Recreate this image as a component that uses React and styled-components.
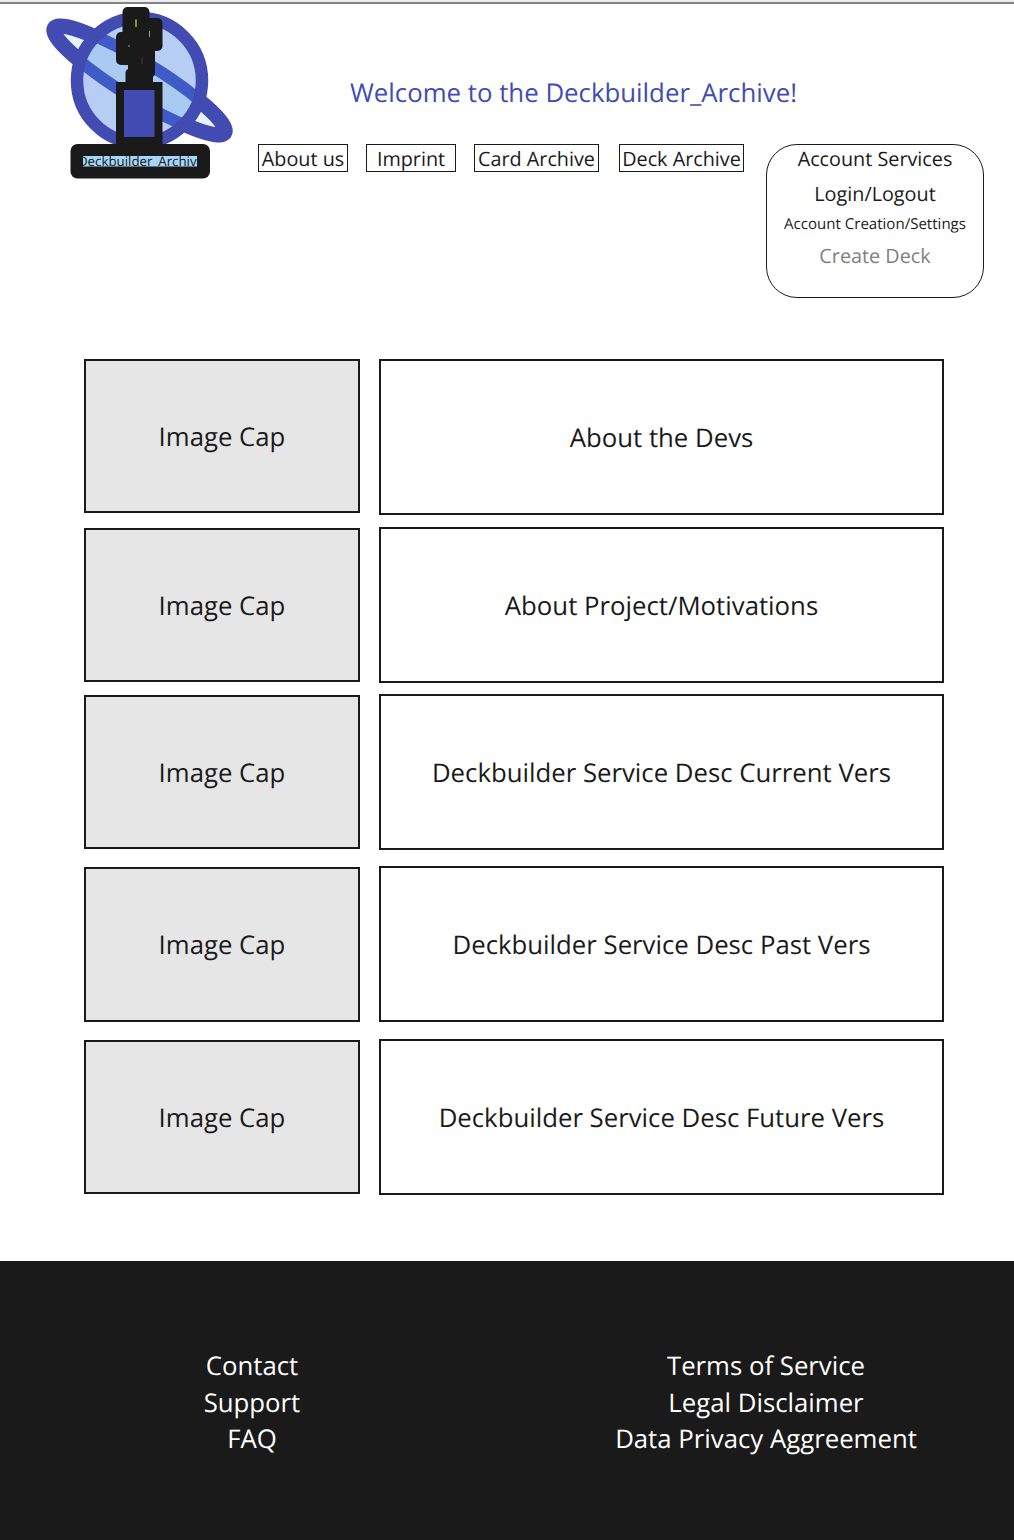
import React from "react";
import styled, { createGlobalStyle } from "styled-components";

const INK = "#1a1a1a";
const BLUE = "#414bb2";

const GlobalStyle = createGlobalStyle`
  *, *::before, *::after { box-sizing: border-box; }
  body {
    margin: 0;
    background: #fff;
    color: ${INK};
    font-family: "Open Sans", "Noto Sans", sans-serif;
    text-rendering: geometricPrecision;
  }
`;

const Page = styled.div`
  width: 1014px;
  height: 1540px;
  display: flex;
  flex-direction: column;
  overflow: hidden;
`;

const TopStrip = styled.div`
  flex: none;
  height: 4px;
  background: #eeeeef;
  border-bottom: 2px solid #838383;
`;

const Header = styled.header`
  flex: none;
  height: 355px;
  display: flex;
  align-items: flex-start;
  padding-left: 36px;
`;

const Logo = styled.svg`
  flex: none;
  display: block;
  width: 210px;
  height: 190px;
  margin-top: -4px;
`;

const Intro = styled.div`
  width: 486px;
  margin: 70px 0 0 12px;
`;

const Title = styled.h1`
  margin: 0;
  padding-left: 92px;
  height: 70px;
  color: ${BLUE};
  font-size: 25.8px;
  font-weight: 400;
  line-height: 37px;
  white-space: nowrap;
`;

const Nav = styled.nav`
  display: grid;
  grid-template-columns: 90px 90px 126px 126px;
  column-gap: 18px;
`;

const NavLink = styled.a`
  height: 28px;
  border: 1px solid ${INK};
  font-size: 19.8px;
  line-height: 27px;
  text-align: center;
  white-space: nowrap;

  &:nth-child(3) { margin-right: 1px; }
  &:nth-child(4) { margin-left: 1px; }
`;

const Account = styled.section`
  flex: none;
  width: 218px;
  height: 154px;
  margin: 140px 0 0 22px;
  border: 1px solid ${INK};
  border-radius: 31px;
  display: flex;
  flex-direction: column;
  align-items: center;
`;

const AccountItem = styled.a`
  height: ${(p) => p.$height}px;
  line-height: ${(p) => p.$line}px;
  font-size: ${(p) => p.$size}px;
  color: ${(p) => (p.$muted ? "#808080" : INK)};
  white-space: nowrap;
`;

const Main = styled.main`
  flex: none;
  height: 902px;
  display: flex;
  align-items: flex-start;
  gap: 19px;
  padding-left: 84px;
`;

const Column = styled.div`
  display: flex;
  flex-direction: column;
  width: ${(p) => p.$width}px;
`;

const Card = styled.div`
  display: flex;
  align-items: center;
  justify-content: center;
  height: ${(p) => p.$height}px;
  margin-top: ${(p) => p.$gap}px;
  padding-bottom: 1px;
  border: 2px solid ${INK};
  background: ${(p) => (p.$filled ? "#e6e6e6" : "#fff")};
  font-size: 25.75px;
  line-height: 36px;
  white-space: nowrap;
`;

const Footer = styled.footer`
  flex: none;
  height: 279px;
  display: flex;
  justify-content: space-between;
  padding: 86px 94px 0 98px;
  background: ${INK};
  color: #fff;
`;

const FooterGroup = styled.div`
  display: flex;
  flex-direction: column;
  width: 308px;
`;

const FooterLink = styled.a`
  font-size: 25.75px;
  line-height: 36.6px;
  text-align: center;
  white-space: nowrap;
`;

const images = [
  { gap: 0, height: 154 },
  { gap: 15, height: 154 },
  { gap: 13, height: 154 },
  { gap: 18, height: 155 },
  { gap: 18, height: 154 },
];

const topics = [
  { text: "About the Devs", gap: 0, height: 156 },
  { text: "About Project/Motivations", gap: 12, height: 156 },
  { text: "Deckbuilder Service Desc Current Vers", gap: 11, height: 156 },
  { text: "Deckbuilder Service Desc Past Vers", gap: 16, height: 156 },
  { text: "Deckbuilder Service Desc Future Vers", gap: 17, height: 156 },
];

function ArchiveLogo() {
  return (
    <Logo viewBox="36 0 210 190" aria-label="Deckbuilder_Archive">
      <defs>
        <clipPath id="planet"><circle cx="139.5" cy="80.5" r="58" /></clipPath>
        <clipPath id="label"><rect x="83" y="156" width="114" height="11" /></clipPath>
      </defs>
      <ellipse cx="139.5" cy="80.5" rx="100" ry="18" transform="rotate(31.5 139.5 80.5)" fill="#e8f4fd" stroke={BLUE} strokeWidth="15" />
      <circle cx="139.5" cy="80.5" r="62" fill="#b6cdf4" />
      <g clipPath="url(#planet)">
        <ellipse cx="139.5" cy="80.5" rx="100" ry="18.5" transform="rotate(31.5 139.5 80.5)" fill="#a9caf3" stroke="#3e5bc7" strokeWidth="12" />
      </g>
      <circle cx="139.5" cy="80.5" r="62.5" fill="none" stroke={BLUE} strokeWidth="12.5" />
      <g fill={INK}>
        <rect x="122.5" y="7" width="27" height="34" rx="5" />
        <rect x="140" y="18" width="22.5" height="33" rx="5" />
        <rect x="116" y="32" width="26" height="33" rx="5" />
        <rect x="128" y="38" width="27" height="39" rx="4" />
        <rect x="125.5" y="69" width="27.5" height="18" rx="4" />
        <rect x="116" y="82" width="46.5" height="67" />
        <rect x="70.5" y="144" width="139.5" height="34.5" rx="7" />
      </g>
      <path d="M136 19.500v7.500" stroke="#b9b92f" strokeWidth="1.500" />
      <path d="M149.500 31v6" stroke="#b3c1dc" strokeWidth=".8" />
      <path d="M129 45v2" stroke="#8398c8" />
      <path d="M142 57.500v6.500" stroke="#57343b" />
      <rect x="124" y="90" width="30.500" height="47" fill={BLUE} />
      <rect x="83" y="156" width="114" height="10.500" fill="#a6d5f7" />
      <g clipPath="url(#label)">
        <text x="141" y="166" textAnchor="middle" fill={INK} fontSize="13.3" fontFamily='"Open Sans", sans-serif'>Deckbuilder_Archive</text>
      </g>
    </Logo>
  );
}

export default function App() {
  return (
    <Page>
      <GlobalStyle />
      <TopStrip />
      <Header>
        <ArchiveLogo />
        <Intro>
          <Title>Welcome to the Deckbuilder_Archive!</Title>
          <Nav>
            <NavLink>About us</NavLink>
            <NavLink>Imprint</NavLink>
            <NavLink>Card Archive</NavLink>
            <NavLink>Deck Archive</NavLink>
          </Nav>
        </Intro>
        <Account>
          <AccountItem $height={32} $line={28} $size={19.8}>Account Services</AccountItem>
          <AccountItem $height={32} $line={34} $size={19.8}>Login/Logout</AccountItem>
          <AccountItem $height={30} $line={31} $size={15.05}>Account Creation/Settings</AccountItem>
          <AccountItem $height={34} $line={34} $size={19.8} $muted>Create Deck</AccountItem>
        </Account>
      </Header>
      <Main>
        <Column $width={276}>
          {images.map((c, i) => (
            <Card key={i} $filled $gap={c.gap} $height={c.height}>Image Cap</Card>
          ))}
        </Column>
        <Column $width={565}>
          {topics.map((c) => (
            <Card key={c.text} $gap={c.gap} $height={c.height}>{c.text}</Card>
          ))}
        </Column>
      </Main>
      <Footer>
        <FooterGroup>
          <FooterLink>Contact</FooterLink>
          <FooterLink>Support</FooterLink>
          <FooterLink>FAQ</FooterLink>
        </FooterGroup>
        <FooterGroup>
          <FooterLink>Terms of Service</FooterLink>
          <FooterLink>Legal Disclaimer</FooterLink>
          <FooterLink>Data Privacy Aggreement</FooterLink>
        </FooterGroup>
      </Footer>
    </Page>
  );
}
